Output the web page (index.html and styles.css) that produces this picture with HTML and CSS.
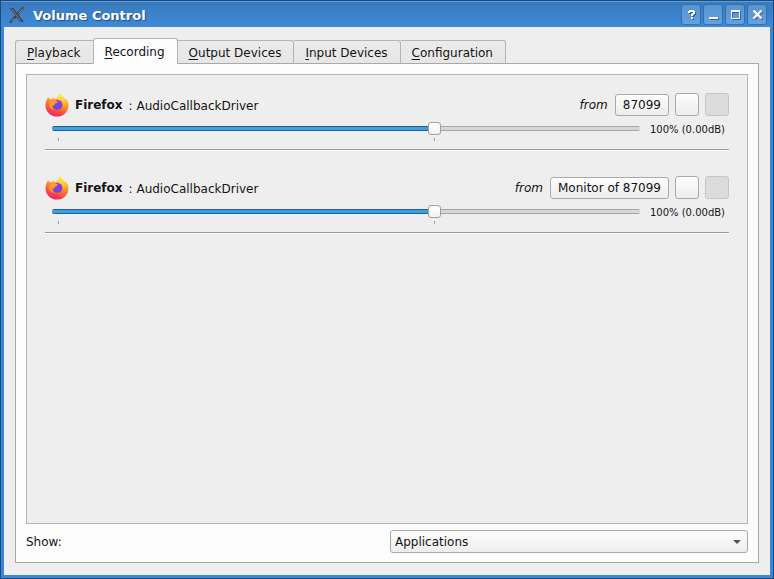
FILE: index.html
```
<!DOCTYPE html>
<html lang="en">
<head>
    <meta charset="UTF-8" />
    <meta name="viewport" content="width=device-width, initial-scale=1.0"/>
    <title>Volume Control</title>
    <link rel="stylesheet" href="styles.css">
</head>
<body>

    <!-- Shared artwork -->
    <svg class="defs" width="0" height="0" aria-hidden="true">
        <defs>
            <linearGradient id="flame" x1="0.8" y1="0" x2="0.4" y2="1">
                <stop offset="0" stop-color="#ffe43c"/>
                <stop offset="0.35" stop-color="#ffab2c"/>
                <stop offset="0.65" stop-color="#ff6633"/>
                <stop offset="1" stop-color="#ee1f68"/>
            </linearGradient>
            <linearGradient id="edge" x1="0.5" y1="0" x2="0.6" y2="1">
                <stop offset="0" stop-color="#fff04a"/>
                <stop offset="0.6" stop-color="#ffc52f"/>
                <stop offset="1" stop-color="#ff8a2e"/>
            </linearGradient>
            <linearGradient id="globe" x1="0.5" y1="0" x2="0.4" y2="1">
                <stop offset="0" stop-color="#a035e8"/>
                <stop offset="1" stop-color="#5a4fd2"/>
            </linearGradient>
            <symbol id="firefox" viewBox="0 0 24 24">
                <path fill="url(#flame)" d="M3.2 4.2 4.600 6.200 7.200 5.900 8.400 4.300 9.400 6.200 12.300 5.200C12.600 3 13.500 1.200 15.200.2 15.700 2.400 18.700 4 19.900 6.500L20.600 5.600C22.800 7.700 23.800 10.400 23.500 13.400 22.900 19.400 18 23.600 12 23.600 5.700 23.600.5 18.700.5 12.500.5 9.400 1.400 6.600 3.200 4.200z"/>
                <path fill="url(#edge)" d="M15.200.2C15.700 2.400 18.700 4 19.900 6.500 21.600 9.600 21.200 13.200 19 16 18.800 11.500 17 8.800 14.200 7.800 12 6.200 12.400 2.200 15.200.2z"/>
                <ellipse cx="12.400" cy="11.800" rx="5" ry="4.900" fill="url(#globe)"/>
                <path fill="#ff9a30" d="M5 7.200C7 6.100 9.300 6.300 11 7.800L12.900 8.600C12.700 9.800 11.500 10.200 10.200 10.600 9.600 11.300 10 12.200 8.600 12.800L7.400 12.600C6.900 14.200 7.800 15.800 9 16.800 6 16.500 4 14 4 11z"/>
            </symbol>
        </defs>
    </svg>

    <div class="window">
        <!-- Title bar -->
        <div class="titlebar">
            <svg class="app-icon" width="18" height="18" viewBox="0 0 18 18" aria-hidden="true">
                <path d="M15.500 1.500 9.700 8M7.800 10.200 2 16.500" stroke="#323b44" stroke-width="2.400"/>
                <path d="M15 2.500 10.500 7.500M6.500 12 3 15.500" stroke="#a89a8a" stroke-width="1"/>
                <path d="M1.500 2H5.500L16 16H12z" fill="#3d464e"/>
                <path d="M3.500 2.500 13 15.500" stroke="#76828c" stroke-width="1"/>
            </svg>
            <div class="titlebar-title">Volume Control</div>
            <div class="titlebar-buttons">
                <button type="button" class="btn-window" aria-label="Help">
                    <svg width="12" height="12" viewBox="0 0 12 12"><path d="M3 1H8V2H9V5H8V6H7V7H5V5H6V4H7V3H4V4H2V2H3zM5 8H7V10H5z" fill="#fff"/></svg>
                </button>
                <button type="button" class="btn-window" aria-label="Minimize">
                    <svg width="12" height="12" viewBox="0 0 12 12"><path d="M1 9H10" stroke="#fff" stroke-width="2"/></svg>
                </button>
                <button type="button" class="btn-window" aria-label="Maximize">
                    <svg width="12" height="12" viewBox="0 0 12 12"><path d="M1.500 2V9.500H9.500V2" fill="none" stroke="#fff"/><path d="M1 2H10" stroke="#fff" stroke-width="2"/></svg>
                </button>
                <button type="button" class="btn-window" aria-label="Close">
                    <svg width="12" height="12" viewBox="0 0 12 12"><path d="M1.500 1.500 9.500 9.500M9.500 1.500 1.500 9.500" stroke="#fff" stroke-width="2.400"/></svg>
                </button>
            </div>
        </div>

        <div class="content">
            <!-- Tabs -->
            <div class="tabs" role="tablist">
                <button type="button" class="tab" role="tab"><u>P</u>layback</button>
                <button type="button" class="tab active" role="tab" aria-selected="true"><u>R</u>ecording</button>
                <button type="button" class="tab" role="tab"><u>O</u>utput Devices</button>
                <button type="button" class="tab" role="tab"><u>I</u>nput Devices</button>
                <button type="button" class="tab" role="tab"><u>C</u>onfiguration</button>
            </div>

            <div class="panel">
                <!-- Recording streams -->
                <div class="streams">
                    <div class="stream">
                        <div class="stream-header">
                            <svg class="stream-icon" width="24" height="24" aria-hidden="true"><use href="#firefox"/></svg>
                            <label class="stream-app" for="volume1">Firefox</label>
                            <span class="stream-name">: AudioCallbackDriver</span>
                            <span class="stream-from">from</span>
                            <button type="button" class="btn btn-device">87099</button>
                            <button type="button" class="btn btn-square" aria-label="Mute"></button>
                            <button type="button" class="btn btn-square" aria-label="Lock channels" disabled></button>
                        </div>
                        <div class="volume">
                            <div class="volume-slider">
                                <input type="range" id="volume1" min="0" max="153" value="100">
                                <div class="ticks"><span></span><span></span></div>
                            </div>
                            <output class="volume-value" for="volume1">100% (0.00dB)</output>
                        </div>
                    </div>

                    <div class="stream">
                        <div class="stream-header">
                            <svg class="stream-icon" width="24" height="24" aria-hidden="true"><use href="#firefox"/></svg>
                            <label class="stream-app" for="volume2">Firefox</label>
                            <span class="stream-name">: AudioCallbackDriver</span>
                            <span class="stream-from">from</span>
                            <button type="button" class="btn btn-device">Monitor of 87099</button>
                            <button type="button" class="btn btn-square" aria-label="Mute"></button>
                            <button type="button" class="btn btn-square" aria-label="Lock channels" disabled></button>
                        </div>
                        <div class="volume">
                            <div class="volume-slider">
                                <input type="range" id="volume2" min="0" max="153" value="100">
                                <div class="ticks"><span></span><span></span></div>
                            </div>
                            <output class="volume-value" for="volume2">100% (0.00dB)</output>
                        </div>
                    </div>
                </div>

                <!-- Filter -->
                <div class="filter">
                    <label for="show">Show:</label>
                    <div class="select">
                        <select id="show">
                            <option>Applications</option>
                        </select>
                    </div>
                </div>
            </div>
        </div>
    </div>

</body>
</html>
```
FILE: styles.css
```
* {
    box-sizing: border-box;
}

body {
    margin: 0;
    font-family: "DejaVu Sans", sans-serif;
    font-size: 12px;
    line-height: 16px;
    color: #141414;
    background-color: #163f6e;
}

button,
select {
    font: inherit;
    color: inherit;
    margin: 0;
}

.defs {
    position: absolute;
}

.window {
    min-height: 100vh;
    display: flex;
    flex-direction: column;
    border: 1px solid #1d497c;
    background-color: #3b87d6;
    padding: 0 3px 3px;
}

/* Title bar */
.titlebar {
    display: flex;
    align-items: center;
    height: 26px;
    margin: 0 -3px;
    padding: 0 6px 0 7px;
    border-top: 1px solid #5c9ee0;
    background: linear-gradient(#3a7abb, #3d8ad9);
}

.titlebar-title {
    flex: 1;
    margin-left: 7px;
    padding-top: 2px;
    color: white;
    font-size: 13px;
    font-weight: bold;
    text-shadow: 1px 1px 1px #1d4d80;
}

.titlebar-buttons {
    display: flex;
    gap: 2px;
}

.btn-window {
    display: flex;
    align-items: center;
    justify-content: center;
    width: 20px;
    height: 21px;
    padding: 1px 0 0 1px;
    border: 1px solid #3371ae;
    border-radius: 3px;
    background: linear-gradient(#5894d2, #64a1e1);
}

.btn-window svg {
    filter: drop-shadow(1px 1px 0 #356390);
}

.content {
    flex: 1;
    display: flex;
    flex-direction: column;
    padding: 11px 11px 12px;
    background-color: #eeeeee;
}

/* Tabs */
.tabs {
    position: relative;
    display: flex;
    align-items: flex-end;
}

.tab {
    height: 24px;
    padding: 2px 12px 0 11px;
    border: 1px solid #b4b4b4;
    border-left-width: 0;
    border-bottom-color: #a8a8a8;
    border-radius: 0 3px 0 0;
    background: linear-gradient(#ebebeb, #e6e6e6);
}

.tab:first-child {
    border-left-width: 1px;
    border-right-width: 0;
    border-radius: 3px 0 0 0;
}

.tab.active {
    height: 26px;
    padding: 2px 12px 0 11px;
    border-left-width: 1px;
    border-bottom-color: #fcfcfc;
    border-radius: 3px 3px 0 0;
    background: #fcfcfc;
}

.tab u {
    text-underline-offset: 2px;
}

.panel {
    flex: 1;
    display: flex;
    flex-direction: column;
    margin-top: -1px;
    padding: 10px 10px 9px;
    border: 1px solid #a8a8a8;
    background-color: #fcfcfc;
}

/* Streams */
.streams {
    flex: 1;
    display: flex;
    flex-direction: column;
    gap: 25px;
    padding: 18px;
    border: 1px solid #b4b4b4;
    background-color: #eeeeee;
}

.stream {
    padding-bottom: 8px;
    border-bottom: 1px solid #999;
    box-shadow: 0 1px 0 #fff;
    margin-bottom: 1px;
}

.stream-header {
    display: flex;
    align-items: center;
    height: 24px;
}

.stream-app {
    margin-left: 6px;
    font-weight: bold;
}

.stream-name {
    flex: 1;
    margin-left: 6px;
    padding-top: 2px;
}

.stream-from {
    margin-right: 7px;
    font-style: italic;
}

.btn {
    border: 1px solid #a9a9a9;
    border-radius: 3px;
    background: linear-gradient(#fdfdfd, #ededed);
}

.btn-device {
    height: 22px;
    padding: 0 7px;
}

.btn-square {
    align-self: flex-start;
    width: 24px;
    height: 23px;
    margin-left: 6px;
    padding: 0;
}

.btn-square:disabled {
    border-color: #c6c6c6;
    background: #dcdcdc;
}

/* Volume */
.volume {
    display: flex;
    height: 24px;
    padding: 5px 4px 0 7px;
}

.volume-slider {
    flex: 1;
}

.volume-value {
    margin-left: 10px;
    font-size: 10px;
    line-height: 16px;
}

input[type="range"] {
    appearance: none;
    display: block;
    width: 100%;
    height: 13px;
    margin: 0;
    background: none;
}

input[type="range"]::-webkit-slider-runnable-track {
    height: 5px;
    border-radius: 2px;
    background:
        linear-gradient(#22608f 1px, #3d9fe3 1px, #3d9fe3 4px, #22608f 4px) 0 0 / 65% 100% no-repeat,
        linear-gradient(#a6a6a6 1px, #d6d6d6 1px, #d6d6d6 4px, #a6a6a6 4px);
}

input[type="range"]::-webkit-slider-thumb {
    appearance: none;
    width: 13px;
    height: 13px;
    margin-top: -4px;
    border: 1px solid #a0a0a0;
    border-radius: 3px;
    background: linear-gradient(#fff, #f3f3f3);
}

.ticks {
    display: grid;
    grid-template-columns: 65% 1fr;
    margin-top: 3px;
    padding: 0 3px 0 6px;
}

.ticks span {
    width: 1px;
    height: 3px;
    background-color: #a0a0a0;
}

/* Filter */
.filter {
    display: flex;
    align-items: center;
    gap: 6px;
    margin-top: 6px;
}

.filter label {
    flex: 1;
}

.select {
    flex: 1;
    position: relative;
}

.select::after {
    content: "";
    position: absolute;
    top: 10px;
    right: 7px;
    border: 4px solid transparent;
    border-top-color: #555;
    border-bottom-width: 0;
    pointer-events: none;
}

select {
    appearance: none;
    display: block;
    width: 100%;
    height: 23px;
    padding: 0 4px;
    border: 1px solid #a9a9a9;
    border-radius: 3px;
    background: linear-gradient(#fdfdfd, #ededed);
}
```
